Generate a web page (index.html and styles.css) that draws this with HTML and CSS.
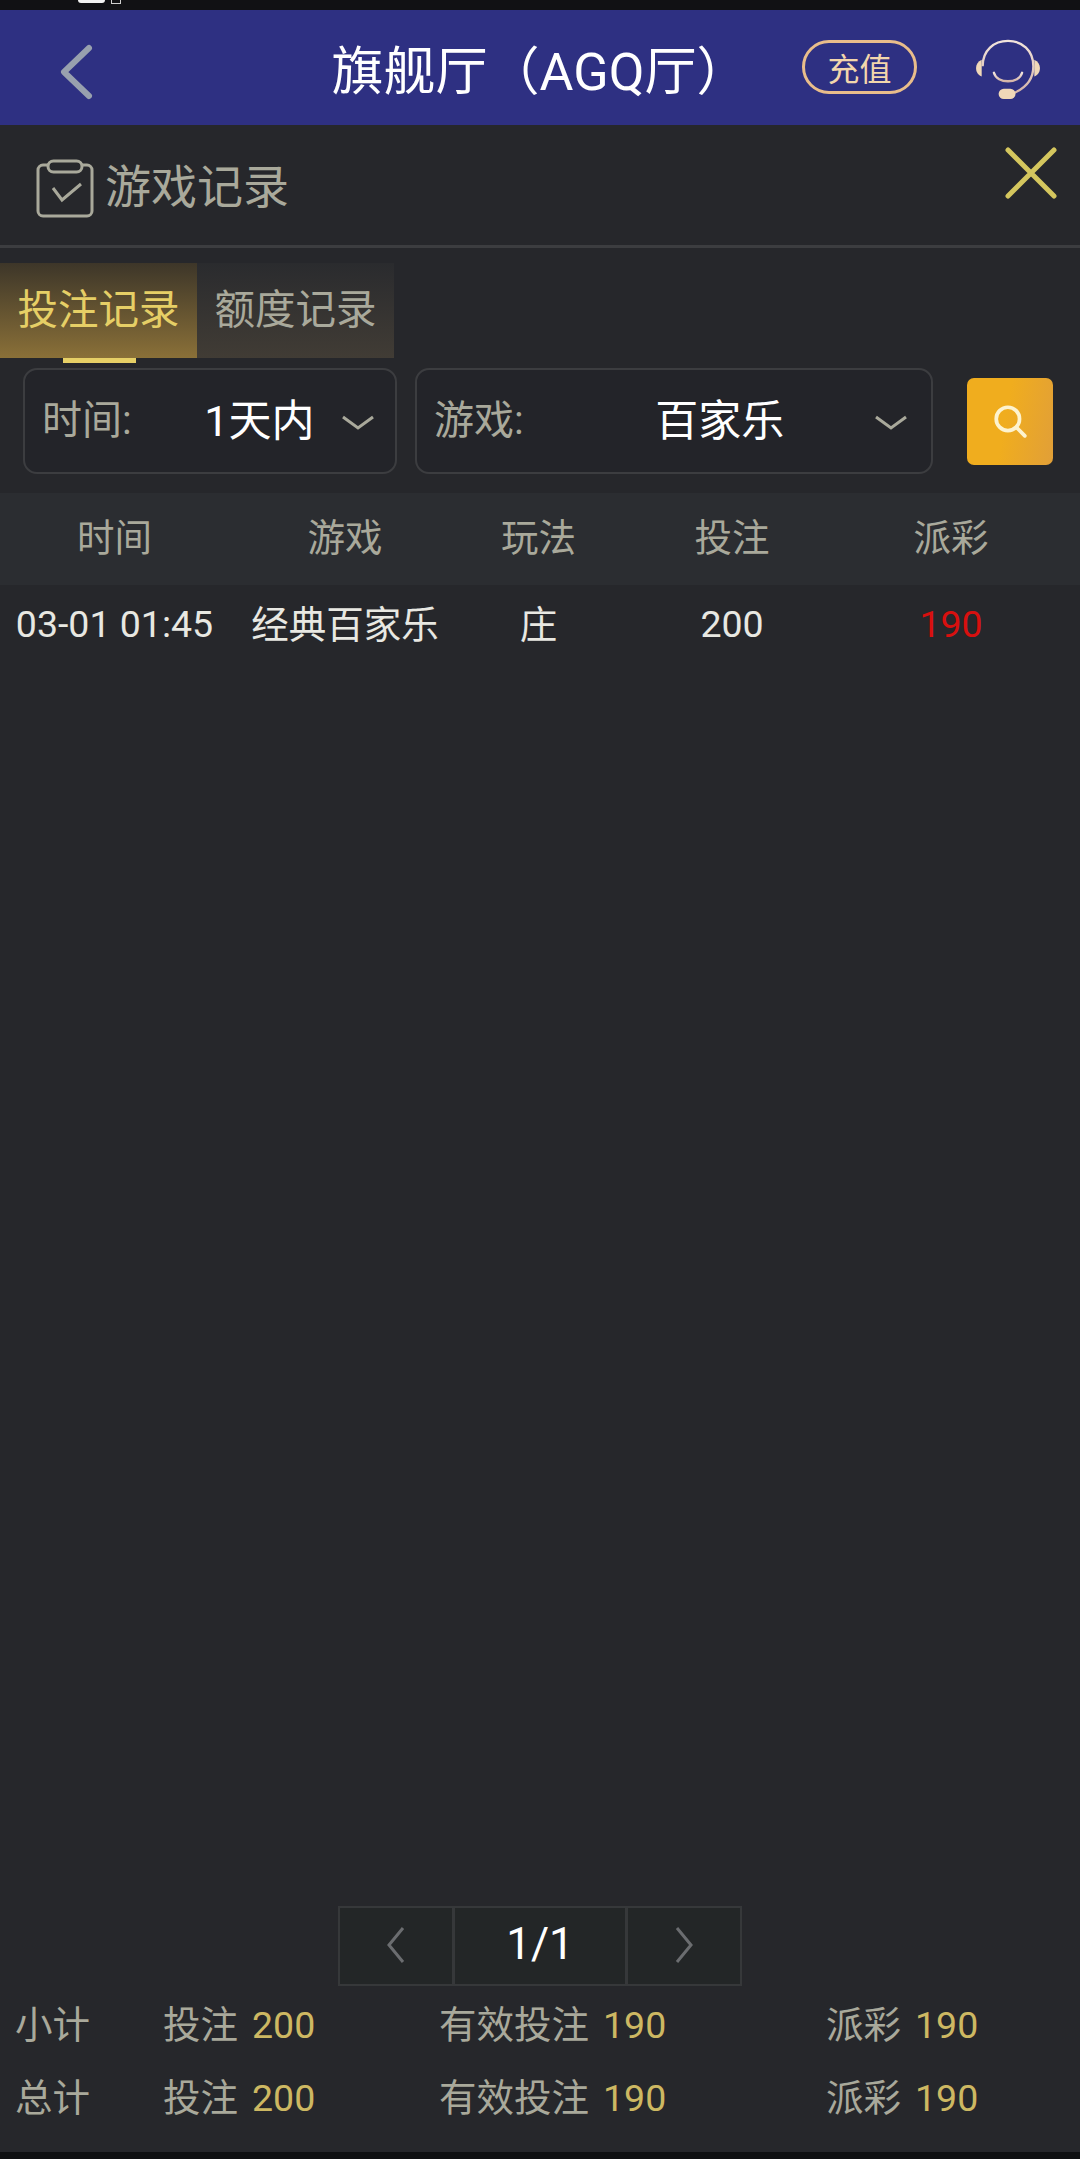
FILE: index.html
```html
<!DOCTYPE html>
<html lang="zh-CN">
<head>
    <meta charset="UTF-8">
    <meta name="viewport" content="width=device-width, initial-scale=1.0">
    <title>游戏记录</title>
    <link rel="stylesheet" href="styles.css">
</head>
<body>
    <div id="status-bar">
        <span class="status-pill"></span>
        <span class="status-cell"></span>
    </div>

    <!-- Top bar -->
    <header id="top-bar">
        <svg class="back-icon" viewBox="0 0 36 60" width="36" height="60">
            <path d="M31 6 L6 30 L31 54" fill="none" stroke="#98a0ae" stroke-width="6" stroke-linecap="round" stroke-linejoin="round"/>
        </svg>
        <h1 id="hall-title">旗舰厅（AGQ厅）</h1>
        <span id="recharge-btn">充值</span>
        <svg class="service-icon" viewBox="0 0 70 66" width="66" height="62">
            <defs>
                <linearGradient id="headset" x1="0" y1="0" x2="0" y2="1">
                    <stop offset="0" stop-color="#f2e4dc"/>
                    <stop offset="1" stop-color="#d4b4a8"/>
                </linearGradient>
            </defs>
            <path d="M8 29 C8 12 20 2 35 2 C50 2 62 12 62 29 C62 42 55 52 40 58" fill="none" stroke="url(#headset)" stroke-width="2.5"/>
            <path d="M20 36 C23 48 47 48 50 36" fill="none" stroke="url(#headset)" stroke-width="2.5" stroke-linecap="round"/>
            <path d="M7 22 V40 C2 38 1 34 1 31 C1 27 3 24 7 22 Z" fill="#f0d8b8"/>
            <path d="M63 22 V40 C68 38 69 34 69 31 C69 27 67 24 63 22 Z" fill="#f0d8b8"/>
            <rect x="25" y="53" width="18" height="11" rx="5.5" fill="#f0d8b8"/>
        </svg>
    </header>

    <main id="panel">
        <!-- Panel title -->
        <div id="panel-head">
            <svg class="record-icon" viewBox="0 0 60 60" width="60" height="60">
                <rect x="2" y="6" width="54" height="51" rx="5" fill="none" stroke="#a9a99b" stroke-width="3"/>
                <rect x="12" y="2" width="34" height="11" rx="5.5" fill="#26272b" stroke="#a9a99b" stroke-width="3"/>
                <path d="M17 29 L26 41 L45 25" fill="none" stroke="#a9a99b" stroke-width="3"/>
            </svg>
            <span id="panel-title">游戏记录</span>
            <svg class="close-icon" viewBox="0 0 52 52" width="52" height="52">
                <path d="M3 3 L49 49 M49 3 L3 49" fill="none" stroke="#d4c65e" stroke-width="5" stroke-linecap="round"/>
            </svg>
        </div>

        <!-- Tabs -->
        <div id="tabs">
            <div class="tab active">投注记录</div>
            <div class="tab">额度记录</div>
        </div>

        <!-- Filters -->
        <div id="filters">
            <div class="filter filter-time">
                <span class="filter-label">时间:</span>
                <span class="filter-value">1天内</span>
                <svg class="chevron" viewBox="0 0 34 18" width="34" height="18"><path d="M2 3 L17 14 L32 3" fill="none" stroke="#a9a99b" stroke-width="3"/></svg>
            </div>
            <div class="filter filter-game">
                <span class="filter-label">游戏:</span>
                <span class="filter-value">百家乐</span>
                <svg class="chevron" viewBox="0 0 34 18" width="34" height="18"><path d="M2 3 L17 14 L32 3" fill="none" stroke="#a9a99b" stroke-width="3"/></svg>
            </div>
            <div id="search-btn">
                <svg viewBox="0 0 34 34" width="36" height="36">
                    <circle cx="15" cy="15" r="11" fill="none" stroke="#fdf3cf" stroke-width="3.5"/>
                    <path d="M23 23 L31 31" fill="none" stroke="#fdf3cf" stroke-width="3.5" stroke-linecap="round"/>
                </svg>
            </div>
        </div>

        <!-- Record table -->
        <div class="table-row table-head">
            <span>时间</span><span>游戏</span><span>玩法</span><span>投注</span><span>派彩</span>
        </div>
        <div class="table-row table-body">
            <span>03-01 01:45</span><span class="cell-cn">经典百家乐</span><span class="cell-cn">庄</span><span>200</span><span class="payout">190</span>
        </div>

        <div id="table-space"></div>

        <!-- Pager -->
        <div id="pager">
            <div class="page-cell page-arrow">
                <svg viewBox="0 0 20 38" width="20" height="38"><path d="M17 2 L3 19 L17 36" fill="none" stroke="#6b6d70" stroke-width="3"/></svg>
            </div>
            <div class="page-cell page-num">1/1</div>
            <div class="page-cell page-arrow">
                <svg viewBox="0 0 20 38" width="20" height="38"><path d="M3 2 L17 19 L3 36" fill="none" stroke="#6b6d70" stroke-width="3"/></svg>
            </div>
        </div>

        <!-- Totals -->
        <div id="totals">
            <div class="total-row">
                <span class="total-name">小计</span>
                <span class="total-item">投注<b>200</b></span>
                <span class="total-item">有效投注<b>190</b></span>
                <span class="total-item">派彩<b>190</b></span>
            </div>
            <div class="total-row">
                <span class="total-name">总计</span>
                <span class="total-item">投注<b>200</b></span>
                <span class="total-item">有效投注<b>190</b></span>
                <span class="total-item">派彩<b>190</b></span>
            </div>
        </div>
    </main>
</body>
</html>
```

FILE: styles.css
```css
*{
    box-sizing: border-box;
}
html, body{
    margin: 0;
    padding: 0;
}
body{
    width: 1080px;
    height: 2159px;
    display: flex;
    flex-direction: column;
    background-color: #0f1012;
    font-family: Roboto, "Noto Sans CJK SC", sans-serif;
    overflow: hidden;
}
/*
* Status bar
*/
#status-bar{
    height: 10px;
    display: flex;
    align-items: flex-start;
    padding-left: 78px;
    gap: 6px;
    background-color: #111114;
}
.status-pill{
    width: 27px;
    height: 3px;
    border-radius: 0 0 3px 3px;
    background-color: #f2f2f2;
}
.status-cell{
    width: 10px;
    height: 4px;
    border: 1px solid #cfcfcf;
    border-top: 0;
}
/*
* Top bar
*/
#top-bar{
    height: 115px;
    display: flex;
    align-items: center;
    padding-left: 58px;
    background-color: #2e3082;
}
.back-icon{
    margin-top: 8px;
}
#hall-title{
    width: 524px;
    margin: 0 0 0 184px;
    text-align: center;
    white-space: nowrap;
    color: #fff;
    font-size: 52px;
    font-weight: 400;
}
#recharge-btn{
    width: 115px;
    height: 54px;
    margin-top: -2px;
    display: flex;
    align-items: center;
    justify-content: center;
    border: 3px solid #e9bd8b;
    border-radius: 27px;
    color: #f2d6ac;
    font-size: 32px;
}
.service-icon{
    margin: 4px 0 0 58px;
}
/*
* Panel
*/
#panel{
    flex: 1;
    display: flex;
    flex-direction: column;
    margin-bottom: 7px;
    background-color: #26272b;
}
#panel-head{
    height: 123px;
    display: flex;
    align-items: center;
    padding: 0 23px 0 36px;
    border-bottom: 3px solid #3c3d40;
}
.record-icon{
    margin-top: 8px;
}
#panel-title{
    margin: -4px 0 0 9px;
    color: #a9a99b;
    font-size: 46px;
}
.close-icon{
    margin: -25px 0 0 auto;
}
/*
* Tabs
*/
#tabs{
    display: flex;
    margin-top: 15px;
}
.tab{
    position: relative;
    width: 197px;
    height: 95px;
    display: flex;
    align-items: center;
    justify-content: center;
    padding-bottom: 8px;
    color: #a9a99b;
    font-size: 40.5px;
    background: linear-gradient(#2a2b2e, #413c35);
}
.tab.active{
    color: #e6cf66;
    background: linear-gradient(#3d3629, #8a7038);
}
.tab.active::after{
    content: "";
    position: absolute;
    left: 63px;
    bottom: -5px;
    width: 73px;
    height: 5px;
    background-color: #e6cf66;
}
/*
* Filters
*/
#filters{
    display: flex;
    align-items: center;
    height: 106px;
    margin-top: 10px;
    padding-left: 23px;
}
.filter{
    height: 106px;
    display: flex;
    align-items: center;
    padding: 0 0 8px 17px;
    border: 2.5px solid #3c3d40;
    border-radius: 14px;
    background-color: #232429;
}
.filter-time{
    width: 374px;
}
.filter-game{
    width: 518px;
    margin-left: 18px;
}
.filter-label{
    color: #a9a99b;
    font-size: 40px;
}
.filter-value{
    flex: 1;
    text-align: center;
    color: #fff;
    font-size: 43px;
}
.filter-time .filter-value{
    padding-left: 56px;
}
.filter-game .filter-value{
    padding-left: 52px;
}
.chevron{
    margin: 12px 20px 0 10px;
}
.filter-game .chevron{
    margin-right: 23px;
}
#search-btn{
    width: 86px;
    height: 87px;
    margin-left: 34px;
    display: flex;
    align-items: center;
    justify-content: center;
    border-radius: 7px;
    background: linear-gradient(100deg, #f0ad1e 45%, #e19f38);
}
/*
* Table
*/
.table-row{
    display: grid;
    grid-template-columns: 229px 232px 155px 232px 206px;
    align-items: center;
    text-align: center;
    font-size: 37.5px;
}
.table-head{
    height: 92px;
    margin-top: 19px;
    padding-bottom: 10px;
    color: #a9a99b;
    background-color: #2b2d31;
}
.table-body{
    height: 78px;
    color: #e8e8e2;
}
.cell-cn{
    padding-bottom: 5px;
}
.payout{
    color: #d8100f;
}
#table-space{
    flex: 1;
}
/*
* Pager
*/
#pager{
    display: flex;
    justify-content: center;
    height: 80px;
}
.page-cell{
    display: flex;
    align-items: center;
    justify-content: center;
    padding-bottom: 2px;
    border: 2.5px solid #36383a;
    background-color: #232627;
}
.page-arrow{
    width: 116px;
}
.page-num{
    width: 174px;
    margin: 0 -1px;
    padding-bottom: 4px;
    color: #fff;
    font-size: 44px;
}
/*
* Totals
*/
#totals{
    height: 166px;
    padding: 0 0 0 15px;
}
.total-row{
    height: 73px;
    display: flex;
    align-items: center;
    padding-bottom: 2px;
    color: #a9a99b;
    font-size: 37.5px;
}
.total-name{
    flex: none;
    width: 148px;
}
.total-item{
    flex: none;
    width: 276px;
    white-space: pre;
}
.total-item + .total-item{
    width: 387px;
}
.total-item:last-child{
    width: auto;
}
.total-item b{
    margin-left: 14px;
    font-weight: 400;
    color: #cdb862;
}
```
